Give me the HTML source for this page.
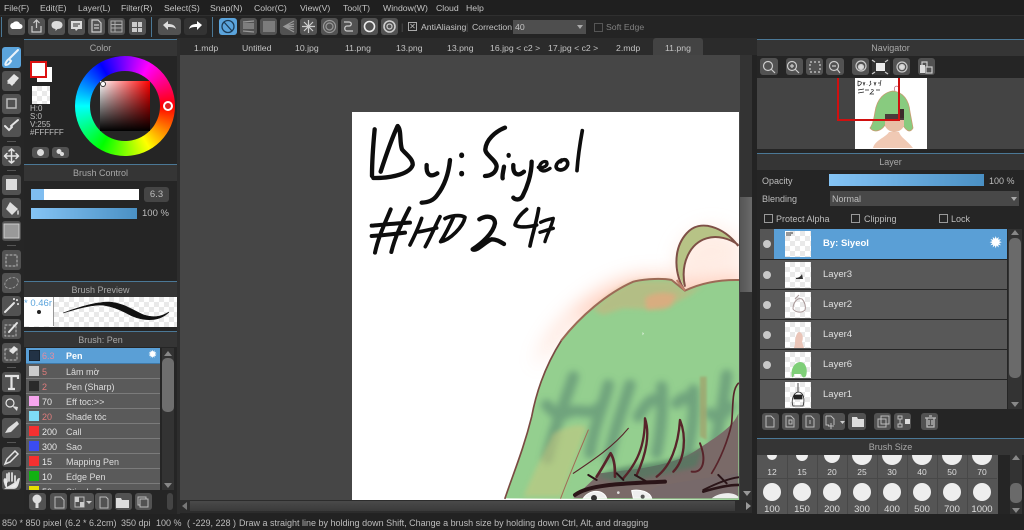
<!DOCTYPE html>
<html><head><meta charset="utf-8"><style>
html,body{margin:0;padding:0;background:#232323;}
#r{position:relative;width:1024px;height:530px;overflow:hidden;background:#232323;font:9px "Liberation Sans",sans-serif;color:#bdbdbd;}
#r div,#r svg,#r span.a{position:absolute;}
.t{white-space:nowrap;line-height:12px;}
.mn{font-size:8.7px;color:#c4c4c4;}
.b{background:#525252;border-radius:3px;}
.p{background:#353535;border-top:1px solid #4b7896;text-align:center;line-height:17px;color:#a8a8a8;}
.c{background:repeating-conic-gradient(#e9e9e9 0 25%,#fff 0 50%) 0 0/10px 10px;}
.row{left:26px;width:134px;height:14px;background:#5a5a5a;border-bottom:1px solid #7b7b7b;}
.sw{left:3px;top:2px;width:10px;height:10px;}
.n{left:16px;top:2px;color:#e8e8e8;font-size:9px;line-height:12px;}
.m{left:40px;top:2px;color:#ddd;font-size:9px;line-height:12px;white-space:nowrap;}
.lr{left:760px;width:247px;height:29px;background:#585858;}
.th{left:25px;top:2px;width:26px;height:26px;}
.ln{left:63px;top:9px;color:#e0e0e0;font-size:9.500px;line-height:12px;}
.ey{left:3px;top:11px;width:8px;height:8px;border-radius:50%;background:#c8c8c8;}
.cb{width:7px;height:7px;border:1px solid #999;}
.l{color:#ddd;text-align:center;width:30px;font-size:8.500px;line-height:12px;}
</style></head><body><div id="r">

<!-- menu -->
<div style="left:0;top:0;width:1024px;height:15px;background:#1f1f1f;border-bottom:1px solid #2f2f2f"></div>
<div class="t mn" style="left:4px;top:2px">File(F)</div><div class="t mn" style="left:40px;top:2px">Edit(E)</div><div class="t mn" style="left:78px;top:2px">Layer(L)</div><div class="t mn" style="left:121px;top:2px">Filter(R)</div><div class="t mn" style="left:164px;top:2px">Select(S)</div><div class="t mn" style="left:210px;top:2px">Snap(N)</div><div class="t mn" style="left:254px;top:2px">Color(C)</div><div class="t mn" style="left:300px;top:2px">View(V)</div><div class="t mn" style="left:343px;top:2px">Tool(T)</div><div class="t mn" style="left:383px;top:2px">Window(W)</div><div class="t mn" style="left:436px;top:2px">Cloud</div><div class="t mn" style="left:466px;top:2px">Help</div>

<!-- toolbar -->
<div style="left:0;top:16px;width:1024px;height:22px;background:#242424"></div>
<div style="left:1px;top:17px;width:1px;height:20px;background:#4b7896"></div>
<div style="left:151px;top:17px;width:1px;height:20px;background:#4b7896"></div>
<div style="left:212px;top:17px;width:1px;height:20px;background:#4b7896"></div>
<div class="b" style="left:8px;top:18px;width:17px;height:17px"></div><div class="b" style="left:28px;top:18px;width:17px;height:17px"></div><div class="b" style="left:48px;top:18px;width:17px;height:17px"></div><div class="b" style="left:68px;top:18px;width:17px;height:17px"></div><div class="b" style="left:88px;top:18px;width:17px;height:17px"></div><div class="b" style="left:108px;top:18px;width:17px;height:17px"></div><div class="b" style="left:129px;top:18px;width:17px;height:17px"></div>
<div class="b" style="left:158px;top:18px;width:23px;height:17px"></div><div class="b" style="left:184px;top:18px;width:23px;height:17px;background:#333"></div>
<div class="b" style="left:219px;top:18px;width:18px;height:17px;background:#5ba4dc"></div><div class="b" style="left:240px;top:18px;width:17px;height:17px"></div><div class="b" style="left:260px;top:18px;width:17px;height:17px"></div><div class="b" style="left:280px;top:18px;width:17px;height:17px"></div><div class="b" style="left:300px;top:18px;width:17px;height:17px"></div><div class="b" style="left:321px;top:18px;width:17px;height:17px"></div><div class="b" style="left:341px;top:18px;width:17px;height:17px"></div><div class="b" style="left:361px;top:18px;width:17px;height:17px"></div><div class="b" style="left:381px;top:18px;width:17px;height:17px"></div>
<svg style="left:0;top:16px" width="400" height="22" viewBox="0 0 400 22" fill="none" stroke="#ccc" stroke-width="1.200">
<path d="M11 12a3 3 0 0 1 2-5 4 4 0 0 1 7 1 2.500 2.500 0 0 1 0 5h-8z" fill="#fff" stroke="none"/>
<path d="M36.500 4v8M33.500 7l3-3 3 3M32 10v6h9v-6"/>
<path d="M56.500 5c4 0 6 1.500 6 4s-2 4-5 4l-2 2v-2c-3-.5-4-2-4-4 0-2.500 2-4 5-4z" fill="#ddd" stroke="none"/>
<path d="M71 5h11v8h-4l-2 2-1-2h-4z" fill="#ddd" stroke="none"/><path d="M73 8h7M73 10h5" stroke="#555"/>
<path d="M92 4h6l3 3v9h-9zM94 9h5M94 12h5"/>
<path d="M111 5h11v11h-11zM111 8.500h11M111 12h11M115 5v11" stroke-width="1" stroke="#aaa"/>
<path d="M132 6h5v5h-5zM138 6h4v5h-4zM132 12h5v4h-5zM138 12h4v4h-4z" fill="#ccc" stroke="none"/>
<path d="M163 9l5-4v3c4 0 7 1 8 5-2-2-5-2-8-2v3z" fill="#ddd" stroke="none"/>
<path d="M202 9l-5-4v3c-4 0-7 1-8 5 2-2 5-2 8-2v3z" fill="#fff" stroke="none"/>
<circle cx="228" cy="10.500" r="6" stroke="#1d3c57" stroke-width="1.300"/><path d="M224 6l8 9" stroke="#1d3c57" stroke-width="1.300"/>
<path d="M243 6l11-1M243 8h11M243 10h11M243 12h11M243 15l11 1" stroke="#999"/>
<path d="M264 5v11M266 5v11M268 5v11M270 5v11M272 5v11M274 5v11" stroke="#999"/>
<path d="M294 5l-10 5.500 10 5.500M294 10.500h-10M294 8l-10 2.500 10 2.500" stroke="#999"/>
<path d="M308.500 4v13M302 10.500h13M304 6l9 9M313 6l-9 9" stroke="#ccc"/>
<circle cx="329.500" cy="10.500" r="6" stroke="#999"/><circle cx="329.500" cy="10.500" r="3.500" stroke="#999"/>
<path d="M344 6h5c3 0 3 4 0 4h-2c-3 0-3 5 0 5h6" stroke-width="1.300"/>
<circle cx="369.500" cy="10.500" r="5" stroke="#eee" stroke-width="1.600"/>
<circle cx="389.500" cy="10.500" r="5.500" stroke-width="1.600"/><circle cx="389.500" cy="10.500" r="2.500"/>
</svg>
<div class="t" style="left:401px;top:21px;color:#555">|</div>
<div class="cb" style="left:408px;top:22px;border-color:#aaa;font-size:8px;line-height:7px;text-align:center">✕</div>
<div class="t mn" style="left:421px;top:21px">AntiAliasing</div><div class="t" style="left:466px;top:21px;color:#555">|</div><div class="t mn" style="left:472px;top:21px">Correction</div>
<div style="left:513px;top:20px;width:73px;height:14px;background:#4e4e4e"></div><div class="t mn" style="left:515px;top:21px">40</div>
<div style="left:577px;top:25px;border:3px solid transparent;border-top:4px solid #aaa"></div>
<div class="cb" style="left:594px;top:23px;border-color:#555"></div><div class="t mn" style="left:606px;top:21px;color:#808080">Soft Edge</div>

<!-- tabs -->
<div style="left:180px;top:38px;width:577px;height:17px;background:#2b2b2b"></div>
<div style="left:653px;top:38px;width:50px;height:17px;background:#434343;border-radius:3px 3px 0 0"></div>
<div class="t mn" style="left:194px;top:42px">1.mdp</div><div class="t mn" style="left:242px;top:42px">Untitled</div><div class="t mn" style="left:295px;top:42px">10.jpg</div><div class="t mn" style="left:345px;top:42px">11.png</div><div class="t mn" style="left:396px;top:42px">13.png</div><div class="t mn" style="left:447px;top:42px">13.png</div><div class="t mn" style="left:490px;top:42px">16.jpg &lt; c2 &gt;</div><div class="t mn" style="left:548px;top:42px">17.jpg &lt; c2 &gt;</div><div class="t mn" style="left:616px;top:42px">2.mdp</div><div class="t mn" style="left:665px;top:42px">11.png</div>

<!-- canvas area -->
<div style="left:180px;top:55px;width:560px;height:445px;background:#464646"></div>
<div style="left:352px;top:112px;width:387px;height:388px;background:#fff;overflow:hidden"></div>

<svg style="left:352px;top:112px" width="387" height="388" viewBox="352 112 387 388">
<defs><filter id="bl" x="-40%" y="-40%" width="180%" height="180%"><feGaussianBlur stdDeviation="28"/></filter><filter id="b2" x="-30%" y="-30%" width="160%" height="160%"><feGaussianBlur stdDeviation="7"/></filter><filter id="b3" x="-30%" y="-30%" width="160%" height="160%"><feGaussianBlur stdDeviation="3"/></filter><filter id="b4" x="-30%" y="-30%" width="160%" height="160%"><feGaussianBlur stdDeviation="10"/></filter></defs>
<g transform="translate(350 110) scale(.3333)" fill="none" stroke="#0d0d0d" stroke-width="13" stroke-linecap="round" stroke-linejoin="round">
<path d="M74 58C70 100 66 150 66 198"/><path d="M92 185C110 130 125 85 143 48C155 60 148 95 156 118C170 135 190 148 188 165C180 190 130 205 70 204"/>
<path d="M230 165C228 190 238 205 262 190M300 150C296 190 285 225 262 255C250 272 235 277 215 278"/>
<path d="M335 135v2M335 190v2" stroke-width="15"/>
<path d="M465 53C435 65 408 90 406 118C405 135 440 150 440 170C438 190 420 198 405 198"/>
<path d="M462 170C460 185 456 195 458 205M476 135v2"/><path d="M490 165C488 195 505 200 522 185M545 155C545 195 530 235 518 258C510 272 495 270 490 263"/>
<path d="M565 172C580 175 595 168 590 156C578 150 565 165 570 178C578 186 590 182 600 175" stroke-width="10"/>
<path d="M635 150C615 160 612 178 632 180C650 178 660 160 648 150C642 148 635 150 632 155" stroke-width="11"/>
<path d="M697 62C690 100 684 140 681 182" stroke-width="11"/>
<path d="M122 298C105 340 85 380 75 428M178 295C155 340 135 380 124 426M65 347C100 344 140 340 180 338M65 378C100 376 135 372 165 368" stroke-width="12"/>
<path d="M215 325C205 355 190 385 180 405M270 320C255 350 240 385 226 410M202 366C220 364 240 358 260 354" stroke-width="11"/>
<path d="M312 318C300 345 285 375 272 395C300 390 340 350 345 322C330 312 300 318 285 326" stroke-width="11"/>
<path d="M388 328C410 315 435 318 435 340C430 370 395 400 368 418C380 426 405 395 425 388C440 388 450 395 462 402" stroke-width="13"/>
<path d="M530 298C515 310 500 325 495 345C510 355 540 350 560 345M566 296C560 335 548 370 540 408" stroke-width="11"/>
<path d="M572 337C585 330 600 327 610 325C605 350 590 375 585 395M570 367C585 362 598 358 610 355" stroke-width="10"/>
</g>
<g transform="translate(490 220) scale(.3333)">
<path d="M135 440C175 320 300 190 450 165L560 165C650 150 745 150 760 150V300H250Z" fill="#ffc9b5" opacity=".8" filter="url(#bl)"/>
<path d="M560 170C540 80 600 20 680 20L760 60V140L640 170Z" fill="#ffe8de" opacity=".8" filter="url(#bl)"/>
<path d="M45 835C70 760 100 690 125 590C140 510 170 430 215 360C270 290 350 220 430 185C470 175 520 175 545 180L585 212C620 195 670 178 750 180V840Z" fill="#94cf8f"/>
<path d="M310 270C350 225 400 190 450 182L545 182L585 214L640 197L600 225L520 270L400 265L340 285Z" fill="#c9b47f" opacity=".6" filter="url(#b2)"/>
<path d="M465 235C490 215 530 215 560 225L540 260L470 270Z" fill="#e8a67e" opacity=".7" filter="url(#b2)"/>
<g fill="none" stroke="#5e8f74" stroke-width="34" stroke-linecap="round" opacity=".68" filter="url(#b4)">
<path d="M250 470C220 560 190 630 172 715M170 555C200 590 215 590 240 575C280 565 300 590 330 560M355 495C340 560 310 620 300 700M420 495C400 560 370 640 355 720M445 590C475 540 490 530 510 545M515 500C520 580 510 650 500 700M560 550C590 520 600 530 610 560M610 510C615 600 600 660 590 710M710 465C700 560 680 640 670 710M660 580C680 600 700 590 720 560"/>
</g>
<path d="M290 620C270 680 240 750 215 830L100 830C130 760 160 700 190 640C230 620 260 610 290 620Z" fill="#c7c77f" opacity=".55" filter="url(#b2)"/>
<path d="M630 470L650 470L650 660L630 650Z" fill="#a2a06a" opacity=".7" filter="url(#b3)"/>
<path d="M250 835L330 760C400 750 540 745 620 690C680 650 730 620 745 580V835Z" fill="#7a6a68"/>
<path d="M320 770C400 720 560 740 640 680L620 740L400 790Z" fill="#4f7a60" opacity=".7" filter="url(#b2)"/>
<path d="M560 835H745V760C680 770 600 780 500 800L450 835Z" fill="#77696a"/>
<g fill="none" stroke="#58242a" stroke-linecap="round" stroke-linejoin="round">
<path d="M45 835C70 760 100 690 125 590C140 510 170 430 215 360" stroke-width="5" stroke="#7a4a42"/>
<path d="M215 360C270 290 350 220 430 185C470 175 520 175 545 180L585 212C620 195 670 178 750 180" stroke="#9c6a56" stroke-width="6"/>
<path d="M295 630C270 690 240 760 212 835" stroke="#a26a54" stroke-width="3"/>
<path d="M250 760C310 720 370 680 415 625" stroke-width="3.500"/>
<path d="M320 770C340 740 355 710 362 700C375 720 375 750 375 770" stroke-width="8"/>
<path d="M400 775C440 730 465 680 465 595C480 640 470 700 440 765" stroke-width="7"/>
<path d="M500 770C540 740 565 680 570 600C590 650 585 720 550 755" stroke-width="7"/>
<path d="M605 755C640 760 650 720 630 670" stroke-width="6"/>
<path d="M745 490C725 510 730 560 725 610C715 660 690 720 665 760" stroke-width="5"/>
<path d="M255 825C300 790 430 790 525 785" stroke="#2b1518" stroke-width="12"/>
<path d="M295 765L320 780M380 760L400 780M435 765L470 785M640 810C680 790 720 775 745 772M685 765L710 790" stroke="#2b1518" stroke-width="6"/>
<path d="M640 815C690 800 720 795 745 795" stroke="#2b1518" stroke-width="8"/>
</g>
<path d="M280 835C295 810 340 805 350 835ZM425 812C450 807 480 815 485 835H430Z" fill="#eee" stroke="#fff" stroke-width="3"/>
<path d="M665 835C690 815 730 815 745 830V835Z" fill="#eee"/>
<circle cx="312" cy="834" r="9" fill="#333"/><circle cx="458" cy="830" r="6" fill="#555"/><circle cx="385" cy="818" r="4" fill="#ddd"/>
<path d="M580 195C545 130 560 50 620 18C660 5 720 35 745 75C710 45 650 40 610 80C585 110 578 150 585 195Z" fill="#b7c386"/>
<path d="M585 212C555 170 545 90 590 40C630 -5 700 20 745 78M585 200C570 130 600 70 650 55C680 45 720 55 745 75" fill="none" stroke="#7e4f46" stroke-width="6"/>
<path d="M585 212L560 180" stroke="#c07f69" stroke-width="6"/>
<path d="M458 336l3 5-3 5z" fill="#fff"/>
</g>
</svg>

<!-- main scrollbars -->
<div style="left:740px;top:55px;width:12px;height:445px;background:#333"></div>
<div style="left:740px;top:197px;width:12px;height:95px;background:linear-gradient(90deg,#555,#6a6a6a)"></div>
<div style="left:180px;top:500px;width:572px;height:13px;background:#2c2c2c"></div>
<div style="left:190px;top:501px;width:545px;height:10px;background:linear-gradient(#4a4a4a,#3a3a3a)"></div>
<div style="left:743px;top:491px;border:4px solid transparent;border-top:5px solid #999"></div>
<div style="left:746px;top:502px;border:4px solid transparent;border-left:5px solid #999"></div>
<div style="left:182px;top:502px;border:4px solid transparent;border-right:5px solid #777;margin-left:-4px"></div>
<div style="left:176px;top:38px;width:4px;height:477px;background:#2d2d2d"></div>

<!-- tools -->
<div style="left:0;top:38px;width:24px;height:477px;background:#262626"></div>
<div class="b" style="left:2px;top:47px;width:19px;height:21px;background:#5ba4dc"></div>
<div class="b" style="left:2px;top:71px;width:19px;height:20px"></div><div class="b" style="left:2px;top:94px;width:19px;height:20px"></div><div class="b" style="left:2px;top:117px;width:19px;height:20px"></div><div class="b" style="left:2px;top:146px;width:19px;height:20px"></div><div class="b" style="left:2px;top:175px;width:19px;height:20px"></div><div class="b" style="left:2px;top:198px;width:19px;height:20px"></div><div class="b" style="left:2px;top:221px;width:19px;height:20px"></div><div class="b" style="left:2px;top:250px;width:19px;height:20px"></div><div class="b" style="left:2px;top:273px;width:19px;height:20px"></div><div class="b" style="left:2px;top:296px;width:19px;height:20px"></div><div class="b" style="left:2px;top:319px;width:19px;height:20px"></div><div class="b" style="left:2px;top:343px;width:19px;height:20px"></div><div class="b" style="left:2px;top:372px;width:19px;height:20px"></div><div class="b" style="left:2px;top:395px;width:19px;height:20px"></div><div class="b" style="left:2px;top:418px;width:19px;height:20px"></div><div class="b" style="left:2px;top:447px;width:19px;height:20px"></div><div class="b" style="left:2px;top:470px;width:19px;height:20px"></div>
<svg style="left:0;top:38px" width="24" height="460" viewBox="0 38 24 460" fill="none" stroke="#e4e4e4" stroke-width="1.500" stroke-linecap="round">
<path d="M18 50L9 59M6 65c-2 0 1-5 3-6l2 2c-1 2-3 4-5 4z" stroke="#eaf3fa" stroke-width="2"/>
<path d="M7 81l7-7 5 4-7 8z" fill="#e4e4e4" stroke="none"/><path d="M8 83h6" />
<rect x="7" y="99" width="9" height="9" stroke="#bbb"/>
<path d="M5 126l4 4 3-3M18 120l-7 6" stroke-width="2"/>
<path d="M11.500 149v14M4.500 156h14M9 151l2.500-2 2.500 2M9 161l2.500 2 2.500-2M7 153.500l-2.500 2.500 2.500 2.500M16 153.500l2.500 2.500-2.500 2.500"/>
<rect x="6" y="179" width="11" height="11" fill="#ddd" stroke="none"/>
<path d="M10 202l8 7-6 6-6-6z" fill="#ddd" stroke="none"/><path d="M18 211v3" stroke="#ddd"/>
<rect x="4" y="224" width="15" height="14" fill="#999" stroke="#ccc" stroke-width="1"/>
<rect x="6" y="255" width="11" height="11" stroke-dasharray="2 2" stroke="#bbb" stroke-width="1"/>
<ellipse cx="11.500" cy="283" rx="7" ry="5" stroke-dasharray="2 2" stroke="#999" stroke-width="1" transform="rotate(-25 11.500 283)"/>
<path d="M5 312L14 303M17 300v.1M14 299v.1M18 304v.1" stroke-width="2"/>
<rect x="5" y="325" width="11" height="11" stroke-dasharray="2 2" stroke="#bbb" stroke-width="1"/><path d="M9 332l8-9" stroke-width="2"/>
<rect x="5" y="349" width="12" height="11" stroke-dasharray="2 2" stroke="#bbb" stroke-width="1"/><path d="M9 351l5-5 4 3-5 5z" fill="#e4e4e4" stroke="none"/>
<path d="M5 376h13v3M11.500 376v13M8 389h7" stroke-width="2.200" stroke-linecap="butt"/>
<circle cx="10" cy="403" r="4" stroke-width="1.200"/><path d="M12 406l5 5 1-4z" fill="#ddd" stroke="none"/>
<path d="M5 433l3-5 9-7 2 3-8 8z" fill="#ddd" stroke="none"/>
<path d="M5 464l2-5 8-8 3 3-8 8z"/>
<path d="M7 488c-3-5-3-9-2-9l2 2v-7M9 481v-8M12 481v-8M15 482v-6M17 482c1-2 1-3 2-3-1 5-2 9-5 9h-7z" fill="#eee" stroke-width="1.700"/>
</svg>
<div style="left:7px;top:141px;width:9px;height:1px;background:#555"></div><div style="left:7px;top:170px;width:9px;height:1px;background:#555"></div><div style="left:7px;top:245px;width:9px;height:1px;background:#555"></div><div style="left:7px;top:367px;width:9px;height:1px;background:#555"></div><div style="left:7px;top:442px;width:9px;height:1px;background:#555"></div>

<!-- Color panel -->
<div style="left:24px;top:40px;width:153px;height:475px;background:#252525"></div>
<div class="p" style="left:24px;top:39px;width:153px;height:16px">Color</div>
<div style="left:75px;top:56px;width:100px;height:100px;border-radius:50%;background:conic-gradient(from 90deg,#f00,#ff0,#0f0,#0ff,#00f,#f0f,#f00)"></div>
<div style="left:90px;top:71px;width:70px;height:70px;border-radius:50%;background:#252525"></div>
<div style="left:100px;top:81px;width:50px;height:50px;background:linear-gradient(transparent,#000),linear-gradient(90deg,#fff,#f00)"></div>
<div style="left:100px;top:81px;width:4px;height:4px;border-radius:50%;border:1px solid #333;background:#fff"></div>
<div style="left:163px;top:101px;width:6px;height:6px;border-radius:50%;border:2px solid #fff;background:#d22"></div>
<div style="left:37px;top:67px;width:15px;height:15px;background:#fff"></div>
<div style="left:30px;top:61px;width:13px;height:13px;background:#fff;border:2px solid #d11"></div>
<div class="c" style="left:32px;top:86px;width:18px;height:18px"></div>
<div class="t" style="left:30px;top:105px;line-height:8px;font-size:8px">H:0<br>S:0<br>V:255<br>#FFFFFF</div>
<div class="b" style="left:32px;top:147px;width:17px;height:11px"></div><div class="b" style="left:52px;top:147px;width:17px;height:11px"></div>
<svg style="left:32px;top:147px" width="38" height="11" fill="#ddd"><circle cx="8.500" cy="5.500" r="3.500"/><circle cx="27" cy="4.500" r="2.500"/><circle cx="30" cy="7" r="2"/></svg>

<!-- Brush Control -->
<div class="p" style="left:24px;top:164px;width:153px;height:16px">Brush Control</div>
<div style="left:31px;top:189px;width:108px;height:11px;background:#fff"></div><div style="left:31px;top:189px;width:13px;height:11px;background:#7fbdf0"></div>
<div class="b" style="left:144px;top:187px;width:25px;height:15px;background:#454545;color:#bbb;text-align:center;line-height:15px;font-size:9.500px">6.3</div>
<div style="left:31px;top:208px;width:106px;height:11px;background:linear-gradient(90deg,#85c4f5,#4a90c4)"></div>
<div class="t" style="left:142px;top:208px;font-size:9.500px">100 %</div>

<!-- Preview -->
<div class="p" style="left:24px;top:281px;width:153px;height:15px">Brush Preview</div>
<div class="c" style="left:24px;top:297px;width:153px;height:30px"></div>
<div style="left:24px;top:297px;width:29px;height:29px;background:#fff;border:0 solid #999;border-right-width:1px;overflow:hidden;color:#5ba4dc;font-size:9.500px;line-height:13px;white-space:nowrap">* 0.46r</div>
<div style="left:37px;top:310px;width:4px;height:4px;border-radius:50%;background:#222"></div>
<svg style="left:24px;top:297px" width="153" height="30"><path d="M39 16C55 10 72 5 85 5C100 6 110 14 120 18C132 22 140 18 145 15C135 25 120 24 108 19C95 12 85 8 75 8C60 9 50 13 39 16Z" fill="#111" stroke="#111" stroke-width=".6"/></svg>

<!-- Brush list -->
<div class="p" style="left:24px;top:331px;width:153px;height:15px">Brush: Pen</div>
<div class="row" style="top:348px;background:#5a9fd6;border-bottom:1px solid #3f78a6;height:15px"><div class="sw" style="background:#223245;border:1px solid #182430;width:9px;height:9px"></div><div class="n" style="color:#e58ca0">6.3</div><div class="m" style="font-weight:bold;color:#fff">Pen</div><div style="left:122px;top:1px;color:#fff;font-size:11px;line-height:12px">✹</div></div>
<div class="row" style="top:364px"><div class="sw" style="background:#ccc"></div><div class="n" style="color:#e07c7c">5</div><div class="m">Lâm mờ</div></div>
<div class="row" style="top:379px"><div class="sw" style="background:#2a2a2a"></div><div class="n" style="color:#e07c7c">2</div><div class="m">Pen (Sharp)</div></div>
<div class="row" style="top:394px"><div class="sw" style="background:#f7a6ee"></div><div class="n">70</div><div class="m">Eff toc:&gt;&gt;</div></div>
<div class="row" style="top:409px"><div class="sw" style="background:#7edcf5"></div><div class="n" style="color:#e07c7c">20</div><div class="m">Shade tóc</div></div>
<div class="row" style="top:424px"><div class="sw" style="background:#f43030"></div><div class="n">200</div><div class="m">Call</div></div>
<div class="row" style="top:439px"><div class="sw" style="background:#3a4cf0"></div><div class="n">300</div><div class="m">Sao</div></div>
<div class="row" style="top:454px"><div class="sw" style="background:#f43030"></div><div class="n">15</div><div class="m">Mapping Pen</div></div>
<div class="row" style="top:469px"><div class="sw" style="background:#12b012"></div><div class="n">10</div><div class="m">Edge Pen</div></div>
<div class="row" style="top:484px;height:6px;overflow:hidden;border:0"><div class="sw" style="background:#e8e000"></div><div class="n">50</div><div class="m">Stipple Pen</div></div>
<div style="left:162px;top:348px;width:12px;height:142px;background:#333"></div>
<div style="left:162px;top:358px;width:12px;height:54px;background:#6e6e6e;border-radius:5px"></div>
<div style="left:164px;top:350px;border:4px solid transparent;border-bottom:5px solid #888;margin-top:-3px"></div>
<div style="left:164px;top:483px;border:4px solid transparent;border-top:5px solid #888"></div>
<div class="b" style="left:29px;top:493px;width:17px;height:17px"></div><div class="b" style="left:50px;top:493px;width:17px;height:17px"></div><div class="b" style="left:70px;top:493px;width:24px;height:17px"></div><div class="b" style="left:95px;top:493px;width:17px;height:17px"></div><div class="b" style="left:115px;top:493px;width:17px;height:17px"></div><div class="b" style="left:135px;top:493px;width:17px;height:17px"></div>
<div style="left:167px;top:493px;width:6px;height:17px;background:#444;border-radius:3px"></div>
<svg style="left:24px;top:490px" width="135" height="22" fill="none" stroke="#bbb"><circle cx="13" cy="9" r="4.500" fill="#ddd" stroke="none"/><path d="M13 11v7" stroke-width="3" stroke="#ddd"/><path d="M31 7h6l3 3v8h-9z"/><rect x="51" y="7" width="9" height="10"/><path d="M51 7h4v5h5v5h-4v-5h-5z" fill="#ccc" stroke="none"/><path d="M62 11h6l-3 3z" fill="#ccc" stroke="none"/><path d="M76 7h6l2 2v9h-8z"/><path d="M92 8h5l1 2h7v8h-13z" fill="#ddd" stroke="none"/><rect x="114" y="7" width="8" height="8"/><rect x="116" y="9" width="8" height="8" fill="#525252"/></svg>

<!-- Navigator -->
<div style="left:757px;top:40px;width:267px;height:475px;background:#252525"></div>
<div class="p" style="left:757px;top:39px;width:267px;height:16px">Navigator</div>
<div class="b" style="left:760px;top:58px;width:18px;height:17px"></div><div class="b" style="left:786px;top:58px;width:17px;height:17px"></div><div class="b" style="left:806px;top:58px;width:17px;height:17px"></div><div class="b" style="left:826px;top:58px;width:18px;height:17px"></div><div class="b" style="left:852px;top:58px;width:17px;height:17px"></div><div class="b" style="left:872px;top:58px;width:18px;height:17px;background:#333"></div><div class="b" style="left:893px;top:58px;width:17px;height:17px"></div><div class="b" style="left:918px;top:58px;width:17px;height:17px"></div>
<svg style="left:757px;top:56px" width="180" height="22" fill="none" stroke="#ccc" stroke-width="1.200"><circle cx="11" cy="10" r="4.500"/><path d="M14 13l4 4M38 13l4 4"/><circle cx="35" cy="10" r="4.500"/><path d="M33 10h4M35 8v4M75 10h4M80 13l3 4"/><rect x="53" y="6" width="10" height="10" stroke-dasharray="2 2"/><circle cx="77" cy="10" r="4.500"/><circle cx="104" cy="10" r="5"/><circle cx="104" cy="11" r="2.500" fill="#ddd"/><rect x="119" y="7" width="9" height="8" fill="#eee" stroke="none"/><path d="M115 4l3 2M131 4l-3 2M115 18l3-2M131 18l-3-2"/><circle cx="145" cy="11" r="5"/><circle cx="145" cy="11" r="2.500" fill="#ddd"/><rect x="163" y="9" width="5" height="8" fill="#ddd" stroke="none"/><rect x="169" y="11" width="6" height="6"/><path d="M165 9v-3h5v5"/></svg>
<div style="left:757px;top:78px;width:267px;height:71px;background:#444"></div>
<div style="left:855px;top:78px;width:72px;height:71px;background:#fff;overflow:hidden"></div>
<svg style="left:855px;top:78px" width="72" height="71" viewBox="0 0 72 71">
<path d="M3 8V3l3 1c1 1 0 3-3 4M8 4l1 3 1-3M12 6v.5M16 3c-2 1 0 2 0 3l-2 2M19 4l1 3 1-3M23 5h2M26 2l-1 6M3 12l6-1M3 15l6-1M10 12h4M16 12c2-1 3 0 2 1l-3 3h4M21 12h4" stroke="#222" fill="none" stroke-width=".7"/>
<path d="M18 70C20 62 30 60 34 54H44C46 60 52 62 58 70Z" fill="#f0c9b4"/>
<path d="M20 34C22 20 30 14 38 13C48 14 54 22 55 34L58 50C55 56 50 52 47 45H31C28 52 20 56 15 50C18 46 19 40 20 34Z" fill="#88cb7f" stroke="#c99b70" stroke-width=".8"/>
<path d="M30 42H49V48C45 56 34 56 30 48Z" fill="#e8bea5"/><rect x="30" y="36" width="19" height="6" fill="#4a3a3a"/><rect x="43" y="31" width="6" height="9" fill="#3b2b2b"/>
<path d="M40 13c-2-4 1-6 4-4" stroke="#b67" fill="none" stroke-width=".7"/>
</svg>
<div style="left:837px;top:78px;width:59px;height:41px;border:2px solid #d01010;border-top:0"></div>

<!-- Layer -->
<div class="p" style="left:757px;top:153px;width:267px;height:16px">Layer</div>
<div class="t" style="left:762px;top:175px">Opacity</div>
<div style="left:829px;top:174px;width:155px;height:12px;background:linear-gradient(90deg,#85c4f5,#4a90c4)"></div>
<div class="t" style="left:989px;top:175px">100 %</div>
<div class="t" style="left:762px;top:193px">Blending</div>
<div style="left:830px;top:191px;width:189px;height:15px;background:#484848"></div><div class="t" style="left:832px;top:193px">Normal</div>
<div style="left:1011px;top:197px;border:3px solid transparent;border-top:4px solid #aaa"></div>
<div class="cb" style="left:764px;top:214px"></div><div class="t" style="left:776px;top:213px">Protect Alpha</div>
<div class="cb" style="left:851px;top:214px"></div><div class="t" style="left:864px;top:213px">Clipping</div>
<div class="cb" style="left:939px;top:214px"></div><div class="t" style="left:951px;top:213px">Lock</div>

<div class="lr" style="top:229px;height:30px;background:#555"><div class="ey"></div><div style="left:14px;top:0;width:233px;height:30px;background:#5a9fd6"></div><div class="c th"></div><div class="ln" style="font-weight:bold;color:#fff">By: Siyeol</div><div style="left:229px;top:6px;color:#fff;font-size:16px;line-height:18px">✹</div></div>
<div class="lr" style="top:260px"><div class="ey"></div><div class="c th"></div><div class="ln">Layer3</div></div>
<div class="lr" style="top:290px"><div class="ey"></div><div class="c th"></div><div class="ln">Layer2</div></div>
<div class="lr" style="top:320px"><div class="ey"></div><div class="c th"></div><div class="ln">Layer4</div></div>
<div class="lr" style="top:350px"><div class="ey"></div><div class="c th"></div><div class="ln">Layer6</div></div>
<div class="lr" style="top:380px"><div class="c th"></div><div class="ln">Layer1</div></div>
<svg style="left:785px;top:231px" width="26" height="178" viewBox="0 0 26 178">
<path d="M1 2h7M1 4h5" stroke="#333"/>
<path d="M11 47c3 0 5-2 6-4l1 5h-7z" fill="#333"/>
<path d="M8 78c0-6 4-12 9-10 3 3 4 8 3 11-3 3-9 3-12-1zM10 68l4-4" stroke="#a99" fill="none"/>
<path d="M10 113c0-7 2-12 4-12 3 0 5 5 3 10l2 6H9z" fill="#eac5b8"/>
<path d="M7 146c-2-8 3-15 8-15 6 0 8 8 6 14-2 3-4 1-5-2h-7c0 2-1 4-2 3z" fill="#7fcf78"/>
<path d="M13 152v9M8 175c-2-5 0-13 5-14 6 0 7 8 5 14zM9 164h8v4H9z" stroke="#222" fill="none" stroke-width=".8"/><rect x="9" y="164" width="8" height="4" fill="#222"/>
</svg>
<div style="left:1008px;top:229px;width:14px;height:180px;background:#333"></div>
<div style="left:1009px;top:238px;width:12px;height:140px;background:#6a6a6a;border-radius:5px"></div>
<div style="left:1011px;top:226px;border:4px solid transparent;border-bottom:5px solid #888"></div>
<div style="left:1011px;top:402px;border:4px solid transparent;border-top:5px solid #888"></div>
<div class="b" style="left:762px;top:413px;width:17px;height:17px"></div><div class="b" style="left:782px;top:413px;width:17px;height:17px"></div><div class="b" style="left:802px;top:413px;width:18px;height:17px"></div><div class="b" style="left:823px;top:413px;width:22px;height:17px"></div><div class="b" style="left:848px;top:413px;width:18px;height:17px"></div><div class="b" style="left:874px;top:413px;width:17px;height:17px"></div><div class="b" style="left:894px;top:413px;width:17px;height:17px"></div><div class="b" style="left:921px;top:413px;width:17px;height:17px"></div>
<svg style="left:757px;top:410px" width="185" height="22" fill="none" stroke="#bbb"><path d="M9 6h5l3 3v8H9zM29 6h5l3 3v8h-8zM49 6h5l3 3v8h-8zM69 6h5l3 3v6M69 6v9h3"/><rect x="32" y="10" width="3" height="4"/><path d="M53 10v4M74 13v6M71 16h6"/><path d="M83 11h5l-2.500 3z" fill="#ccc" stroke="none"/><path d="M95 7h5l1 2h6v8H95z" fill="#ddd" stroke="none"/><rect x="121" y="9" width="8" height="8"/><rect x="124" y="6" width="8" height="8"/><path d="M141 6h4v3h-4zM141 14h4v3h-4zM143 9v5"/><rect x="148" y="9" width="5" height="5" fill="#ddd" stroke="none"/><path d="M168 8h11M170 8v9h7V8M172 6h3M172 10v5M175 10v5" stroke-width="1.300"/></svg>

<!-- Brush size -->
<div class="p" style="left:757px;top:438px;width:267px;height:16px">Brush Size</div>
<div style="left:757px;top:455px;width:241px;height:60px;background:#555;overflow:hidden"></div>
<div style="left:757px;top:478px;width:240px;height:1px;background:#484848"></div>
<div style="left:787px;top:455px;width:1px;height:60px;background:#484848"></div><div style="left:817px;top:455px;width:1px;height:60px;background:#484848"></div><div style="left:847px;top:455px;width:1px;height:60px;background:#484848"></div><div style="left:877px;top:455px;width:1px;height:60px;background:#484848"></div><div style="left:907px;top:455px;width:1px;height:60px;background:#484848"></div><div style="left:937px;top:455px;width:1px;height:60px;background:#484848"></div><div style="left:967px;top:455px;width:1px;height:60px;background:#484848"></div>
<svg style="left:757px;top:455px" width="241" height="20" fill="#eee"><circle cx="15" cy="0" r="5"/><circle cx="45" cy="0" r="6"/><circle cx="75" cy="0" r="8"/><circle cx="105" cy="0" r="10"/><circle cx="135" cy="0" r="10"/><circle cx="165" cy="0" r="10"/><circle cx="195" cy="0" r="10"/><circle cx="225" cy="0" r="10"/></svg>
<div class="l" style="left:757px;top:466px">12</div><div class="l" style="left:787px;top:466px">15</div><div class="l" style="left:817px;top:466px">20</div><div class="l" style="left:847px;top:466px">25</div><div class="l" style="left:877px;top:466px">30</div><div class="l" style="left:907px;top:466px">40</div><div class="l" style="left:937px;top:466px">50</div><div class="l" style="left:967px;top:466px">70</div>
<svg style="left:757px;top:480px" width="241" height="24" fill="#eee"><circle cx="15" cy="12" r="9"/><circle cx="45" cy="12" r="9"/><circle cx="75" cy="12" r="9"/><circle cx="105" cy="12" r="9"/><circle cx="135" cy="12" r="9"/><circle cx="165" cy="12" r="9"/><circle cx="195" cy="12" r="9"/><circle cx="225" cy="12" r="9"/></svg>
<div class="l" style="left:757px;top:504px;font-size:9.500px">100</div><div class="l" style="left:787px;top:504px;font-size:9.500px">150</div><div class="l" style="left:817px;top:504px;font-size:9.500px">200</div><div class="l" style="left:847px;top:504px;font-size:9.500px">300</div><div class="l" style="left:877px;top:504px;font-size:9.500px">400</div><div class="l" style="left:907px;top:504px;font-size:9.500px">500</div><div class="l" style="left:937px;top:504px;font-size:9.500px">700</div><div class="l" style="left:967px;top:504px;font-size:9.500px">1000</div>
<div style="left:1010px;top:455px;width:12px;height:60px;background:#333"></div>
<div style="left:1010px;top:483px;width:12px;height:20px;background:#6a6a6a;border-radius:5px"></div>
<div style="left:1012px;top:451px;border:4px solid transparent;border-bottom:5px solid #888"></div>
<div style="left:1012px;top:508px;border:4px solid transparent;border-top:5px solid #888"></div>

<!-- status -->
<div style="left:0;top:514px;width:1024px;height:16px;background:#222"></div>
<div class="t" style="left:2px;top:517px">850 * 850 pixel</div><div class="t" style="left:65px;top:517px">(6.2 * 6.2cm)</div><div class="t" style="left:121px;top:517px">350 dpi</div><div class="t" style="left:156px;top:517px">100 %</div><div class="t" style="left:187px;top:517px">( -229, 228 )</div><div class="t" style="left:239px;top:517px">Draw a straight line by holding down Shift, Change a brush size by holding down Ctrl, Alt, and dragging</div>

</div></body></html>
